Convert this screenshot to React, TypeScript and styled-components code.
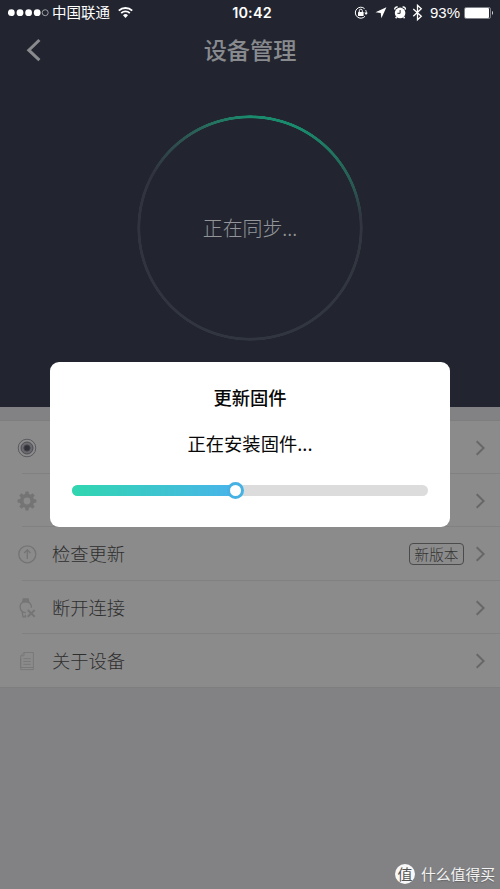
import React from 'react';
import styled, { createGlobalStyle } from 'styled-components';

const GlobalStyle = createGlobalStyle`
  * { box-sizing: border-box; }
  html, body { margin: 0; padding: 0; }
  body {
    font-family: "Liberation Sans", "Noto Sans CJK SC", sans-serif;
    background: #828285;
    overflow: hidden;
  }
  svg { display: block; flex: none; }
`;

const cjk = '"Noto Sans CJK SC", sans-serif';

const Screen = styled.div`
  position: relative;
  display: flex;
  flex-direction: column;
  width: 500px;
  height: 889px;
  background: #828285;
`;

const Hero = styled.header`
  display: flex;
  flex-direction: column;
  height: 407px;
  background: #22252f;
`;

const StatusBar = styled.div`
  display: grid;
  grid-template-columns: 1fr auto 1fr;
  align-items: center;
  height: 25px;
  padding: 0 6px 0 8px;
  color: #fff;
`;

const StatusGroup = styled.div<{ $end?: boolean }>`
  display: flex;
  align-items: center;
  justify-content: ${(p) => (p.$end ? 'flex-end' : 'flex-start')};
`;

const Carrier = styled.span`
  margin: 0 8px 2px 3px;
  font: 400 14.5px/22px ${cjk};
`;

const Clock = styled.span`
  font: 600 14.4px/24px Inter, sans-serif;
  letter-spacing: 0.2px;
  padding-left: 2px;
`;

const BatteryText = styled.span`
  margin: 0 4px 0 6px;
  font: 400 15px/24px "Liberation Sans", sans-serif;
`;

const NavBar = styled.div`
  display: grid;
  grid-template-columns: 60px 1fr 60px;
  align-items: center;
  height: 50px;
  color: #888a8e;
`;

const BackButton = styled.button`
  padding: 0 0 0 26px;
  border: 0;
  background: none;
  color: inherit;
`;

const Title = styled.h1`
  margin: 0;
  text-align: center;
  font: 500 23.2px/48px ${cjk};
  padding-bottom: 2px;
`;

const RingArea = styled.div`
  display: flex;
  justify-content: center;
  padding-top: 40px;
`;

const Ring = styled.div`
  display: grid;
  place-items: center;
  width: 226px;
  height: 226px;

  &::before,
  > * {
    grid-area: 1 / 1;
  }

  &::before {
    content: '';
    width: 226px;
    height: 226px;
    border-radius: 50%;
    background: conic-gradient(
      #1a8c6d 0deg,
      #198b6c 26deg,
      #20745f 48deg,
      #2a5852 68deg,
      #31363f 84deg,
      #31343f 300deg,
      #2d5753 325deg,
      #247461 342deg,
      #1a8c6d 360deg
    );
    mask: radial-gradient(circle, transparent 109.4px, #000 110px, #000 112.4px, transparent 113px);
  }
`;

const SyncText = styled.span`
  font: 300 19.9px/30px ${cjk};
  color: #93959a;
`;

const List = styled.ul`
  list-style: none;
  margin: 14px 0 0;
  padding: 0;
  height: 266px;
  background: #8b8b8b;
  box-shadow: 0 0 0 0.5px #7b7b7b;
`;

const Row = styled.li`
  display: grid;
  grid-template-columns: 22px 1fr;
  height: 53.2px;
`;

const RowIcon = styled.span`
  display: grid;
  place-items: center;
  width: 20px;
  margin-left: 17px;
  padding-top: 1px;
`;

const RowBody = styled.span<{ $divided: boolean }>`
  display: flex;
  align-items: center;
  padding: 2px 14px 0 30px;
  border-bottom: 1px solid ${(p) => (p.$divided ? '#818181' : 'transparent')};
`;

const RowLabel = styled.span`
  flex: 1;
  padding-bottom: 2px;
  font: 300 18.3px/30px ${cjk};
  color: #2e2e2e;
`;

const Badge = styled.span`
  width: 55px;
  height: 22px;
  margin-right: 11px;
  border: 1.5px solid #4b4b4b;
  border-radius: 4px;
  text-align: center;
  font: 300 14.6px/19px ${cjk};
  color: #343434;
`;

const Dialog = styled.section`
  position: absolute;
  left: 50px;
  top: 362px;
  width: 400px;
  height: 165px;
  padding: 20px 22px 0;
  border-radius: 9px;
  background: #fff;
  color: #080808;
  text-align: center;
`;

const DialogTitle = styled.h2`
  margin: 0;
  font: 500 18.3px/30px ${cjk};
`;

const DialogText = styled.p`
  margin: 16px 0 0;
  font: 400 18.3px/30px ${cjk};
`;

const Track = styled.div`
  display: flex;
  align-items: center;
  height: 11px;
  margin-top: 27px;
  border-radius: 6px;
  background: #dcdcdc;
`;

const Fill = styled.div`
  width: 158px;
  height: 11px;
  border-radius: 6px 0 0 6px;
  background: linear-gradient(90deg, #30d6b0, #48b5e8);
`;

const Knob = styled.div`
  width: 17px;
  height: 17px;
  margin-left: -3px;
  border: 3px solid #46b2e3;
  border-radius: 50%;
  background: #fff;
`;

const Watermark = styled.footer`
  position: absolute;
  right: 5px;
  bottom: 4px;
  display: flex;
  align-items: center;
  gap: 6px;
  color: #f4f4f4;
  font: 400 14.8px/22px ${cjk};
  text-shadow: 0 1px 1px #666;
`;

const Seal = styled.span`
  width: 20px;
  height: 20px;
  border-radius: 50%;
  background: #f8f8f8;
  color: #555;
  text-align: center;
  text-shadow: none;
  font: 400 15px/19px ${cjk};
`;

const Signal = () => (
  <svg width="41" height="10" viewBox="0 0 41 10" fill="#fff">
    {[3.3, 12, 20.6, 29.2].map((x) => (
      <circle key={x} cx={x} cy="4.7" r="3.4" />
    ))}
    <circle cx="37.2" cy="4.7" r="3" fill="none" stroke="#d0d1d4" strokeWidth=".7" />
  </svg>
);

const Wifi = () => (
  <svg width="15" height="12" viewBox="0 0 15 12" fill="none" stroke="#fff" strokeWidth="1.8">
    <path d="M.8 3.7a9.6 9.6 0 0 1 13.4 0M3.2 6.2a6.2 6.2 0 0 1 8.6 0" />
    <path d="M7.5 10.9 5 8.3a3.5 3.5 0 0 1 5 0z" fill="#fff" stroke="none" />
  </svg>
);

const StatusIcons = () => (
  <svg width="70" height="18" viewBox="354 4 70 18" fill="none" stroke="#fff">
    <path d="M364.6 8.7a5.5 5.5 0 1 0 .4 7.6M366.3 13a5.6 5.6 0 0 0-.6-2.9" strokeWidth="1" />
    <path d="m364.3 12.6 3.6.1-1.9 2.3z" fill="#fff" stroke="none" />
    <rect x="358" y="12" width="5.6" height="4" rx=".5" fill="#fff" stroke="none" />
    <path d="M359.3 12v-1.3a1.5 1.5 0 0 1 3 0V12" />
    <path d="m386.4 7.3-5 11-.7-5.2-5.2-.8z" fill="#fff" stroke="none" />
    <circle cx="400.1" cy="12.9" r="5.3" fill="#fff" stroke="none" />
    <path d="M394.9 9.6a2 2 0 0 1 2.8-2.4M402.6 7.2a2 2 0 0 1 2.7 2.4M396.6 17.1l-1 1M403.6 17.1l1 1" strokeWidth="1.5" />
    <path d="M400.1 10v3.3h-2.7" stroke="#22252f" strokeWidth="1" />
    <path d="m413.3 9 8 7.3-3.8 3.4V5.3l3.8 3.5-8 7.4" strokeWidth="1.3" />
  </svg>
);

const Battery = () => (
  <svg width="30" height="12" viewBox="0 0 30 12">
    <rect x=".5" y=".5" width="26" height="11" rx="1.6" fill="none" stroke="#a9abb0" strokeWidth=".7" />
    <rect x="1" y="1" width="24" height="10" rx="1" fill="#fff" />
    <path d="M28 4.1c1.1.3 1.1 3.5 0 3.8z" fill="#fff" />
  </svg>
);

const BackArrow = () => (
  <svg width="16" height="24" viewBox="0 0 16 24" fill="none" stroke="currentColor" strokeWidth="3">
    <path d="M13.4 2 2.8 12.2l10.6 10" />
  </svg>
);

const Chevron = () => (
  <svg width="11" height="16" viewBox="0 0 11 16" fill="none" stroke="#676767" strokeWidth="2">
    <path d="m1.7 1.2 6.9 6.8-6.9 6.8" />
  </svg>
);

const TargetIcon = () => (
  <svg width="20" height="20" viewBox="0 0 20 20" fill="none" stroke="#4d4d55">
    <circle cx="10" cy="10" r="8.8" strokeWidth=".8" />
    <circle cx="10" cy="10" r="6" fill="#69696e" strokeWidth="1" />
    <circle cx="10" cy="10" r="3.1" fill="#30303a" stroke="#44444c" strokeWidth="1" />
  </svg>
);

const GearIcon = () => (
  <svg width="20" height="20" viewBox="0 0 20 20" fill="none" stroke="#747474">
    <circle cx="10" cy="10" r="5.3" strokeWidth="3.8" />
    {[0, 45, 90, 135, 180, 225, 270, 315].map((a) => (
      <path key={a} d="M8.1 3.8 8.5.6h3l.4 3.2z" fill="#747474" stroke="none" transform={`rotate(${a} 10 10)`} />
    ))}
  </svg>
);

const UpdateIcon = () => (
  <svg width="20" height="20" viewBox="0 0 20 20" fill="none" stroke="#747474" strokeWidth="1.3">
    <circle cx="10.3" cy="10.3" r="8.5" />
    <path d="M10.3 15V5.9M7.2 9l3.1-3.1L13.4 9" />
  </svg>
);

const WatchOffIcon = () => (
  <svg width="20" height="20" viewBox="0 0 20 20" fill="none" stroke="#757575" strokeWidth="1.3">
    <path d="M5.7 4.4 6.3 1h4.8l.7 3.4" fill="#777" />
    <path d="M8.8 14.6c-2.4-.1-4.6-1.4-5.4-3.6-1.4-3.6.9-7.3 5-7.5 3.7-.1 6.4 2.8 6 6.3" />
    <path d="M5.2 14.2 6 18.8h2.6l-.4-2" />
    <path d="m10.8 12 6.9 6.8M17.7 12l-7 6.8" strokeWidth="1.9" />
  </svg>
);

const DocumentIcon = () => (
  <svg width="20" height="20" viewBox="0 0 20 20" fill="none" stroke="#777" strokeWidth=".9">
    <path d="M7 1.5h9.4v15H3.7V4.8zM7 1.5v3.3H3.7M3.7 7v11.6h12.7v-2" />
    <path d="M6.3 7.7h7.5M6.3 10.5h7.5M6.3 13.3h7.5" />
  </svg>
);

const rows = [
  { label: '', Icon: TargetIcon },
  { label: '', Icon: GearIcon },
  { label: '检查更新', Icon: UpdateIcon, badge: '新版本' },
  { label: '断开连接', Icon: WatchOffIcon },
  { label: '关于设备', Icon: DocumentIcon },
];

export default function App() {
  return (
    <>
      <GlobalStyle />
      <Screen>
        <Hero>
          <StatusBar>
            <StatusGroup>
              <Signal />
              <Carrier>中国联通</Carrier>
              <Wifi />
            </StatusGroup>
            <Clock>10:42</Clock>
            <StatusGroup $end>
              <StatusIcons />
              <BatteryText>93%</BatteryText>
              <Battery />
            </StatusGroup>
          </StatusBar>
          <NavBar>
            <BackButton aria-label="返回">
              <BackArrow />
            </BackButton>
            <Title>设备管理</Title>
          </NavBar>
          <RingArea>
            <Ring>
              <SyncText>正在同步...</SyncText>
            </Ring>
          </RingArea>
        </Hero>
        <List>
          {rows.map(({ label, Icon, badge }, i) => (
            <Row key={i}>
              <RowIcon>
                <Icon />
              </RowIcon>
              <RowBody $divided={i < rows.length - 1}>
                <RowLabel>{label}</RowLabel>
                {badge && <Badge>{badge}</Badge>}
                <Chevron />
              </RowBody>
            </Row>
          ))}
        </List>
        <Dialog role="dialog">
          <DialogTitle>更新固件</DialogTitle>
          <DialogText>正在安装固件...</DialogText>
          <Track>
            <Fill />
            <Knob />
          </Track>
        </Dialog>
        <Watermark>
          <Seal>值</Seal>
          <span>什么值得买</span>
        </Watermark>
      </Screen>
    </>
  );
}
